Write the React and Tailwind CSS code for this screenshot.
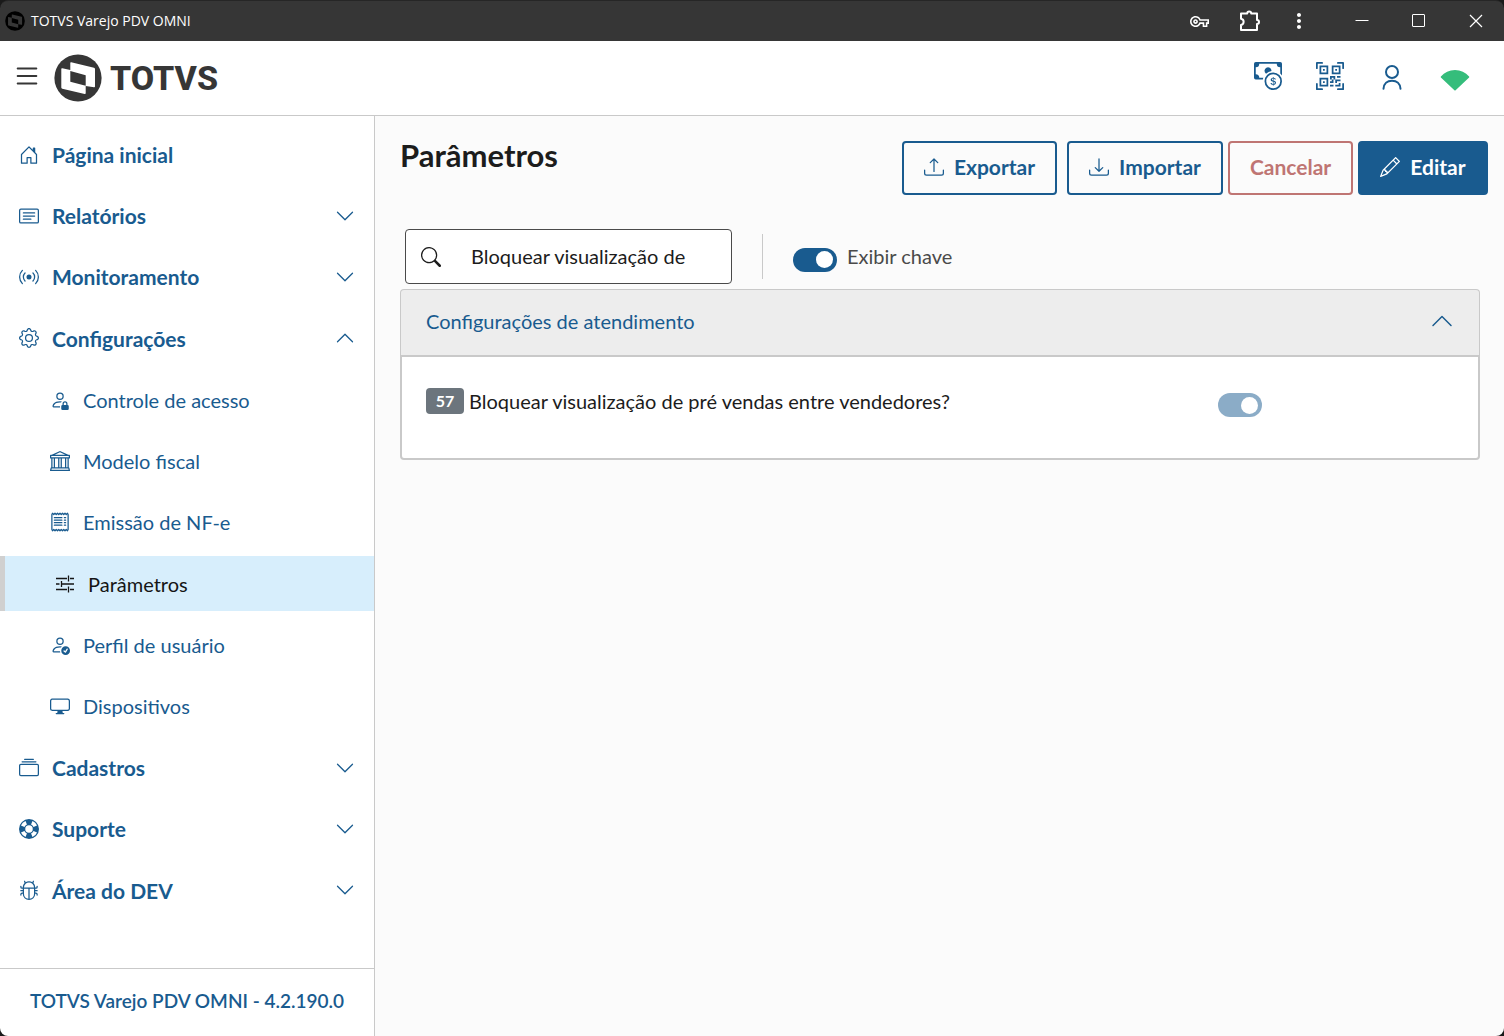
import { useState } from "react";
import clsx from "clsx";
import {
  BsBank,
  BsBroadcast,
  BsBug,
  BsCardText,
  BsCashCoin,
  BsChevronDown,
  BsChevronUp,
  BsCollection,
  BsDisplay,
  BsDownload,
  BsGear,
  BsHouseDoor,
  BsLifePreserver,
  BsList,
  BsPencil,
  BsPersonCheck,
  BsPersonLock,
  BsQrCodeScan,
  BsReceipt,
  BsSearch,
  BsUpload,
} from "react-icons/bs";
import { MdMoreVert, MdOutlineVpnKey } from "react-icons/md";

const menu = [
  { label: "Página inicial", icon: BsHouseDoor },
  { label: "Relatórios", icon: BsCardText, group: true },
  { label: "Monitoramento", icon: BsBroadcast, group: true },
  { label: "Configurações", icon: BsGear, group: true, open: true },
  { label: "Controle de acesso", icon: BsPersonLock, sub: true },
  { label: "Modelo fiscal", icon: BsBank, sub: true },
  { label: "Emissão de NF-e", icon: BsReceipt, sub: true },
  { label: "Parâmetros", icon: TuneIcon, sub: true, active: true },
  { label: "Perfil de usuário", icon: BsPersonCheck, sub: true },
  { label: "Dispositivos", icon: BsDisplay, sub: true },
  { label: "Cadastros", icon: BsCollection, group: true },
  { label: "Suporte", icon: BsLifePreserver, group: true },
  { label: "Área do DEV", icon: BsBug, group: true },
];

function LogoMark({ className }) {
  return (
    <svg viewBox="0 0 48 48" className={className} aria-hidden="true">
      <circle cx="24" cy="24" r="23.6" fill="currentColor" />
      <path
        className="fill-(--mark)"
        fillRule="evenodd"
        d="M17.2 8.3 40 13.8q1 .3 1 1.2V32.4q0 1-1 .8L31.7 31.9V39.2q0 1-1 .8L8.3 34.8q-1-.3-1-1.2V15q0-1 1-.8L16.3 16V9q0-.9.9-.7ZM16.3 17V27.7L31.7 31.8V21.2Z"
      />
    </svg>
  );
}

function TuneIcon({ className }) {
  return (
    <svg viewBox="0 0 20 20" className={className} fill="none" stroke="currentColor" strokeWidth="1.3">
      <path d="M1 4.5H12M15 4.5H19M13.5 1.5V7.5M1 10H4.5M6.5 10H19M6.5 7V13M1 15.5H12M15 15.5H19M13.5 12.5V18.5" />
    </svg>
  );
}

function PuzzleIcon() {
  return (
    <svg viewBox="0 0 22 22" className="size-[22px]" fill="none" stroke="currentColor" strokeWidth="2" strokeLinejoin="round">
      <path d="M3 3.5H9.2a2 2 0 0 1 4 0H19V10a2 2 0 0 1 0 4v6H3V15a3.2 3.2 0 0 0 0-6.3Z" />
    </svg>
  );
}

function UserIcon() {
  return (
    <svg viewBox="0 0 28 28" className="size-7" fill="none" stroke="currentColor" strokeWidth="2" strokeLinecap="round">
      <circle cx="14" cy="10" r="6" />
      <path d="M5.5 26.8C5.8 21.6 9.3 18.8 14 18.8S22.2 21.6 22.5 26.8" />
    </svg>
  );
}

function SignalIcon() {
  return (
    <svg viewBox="0 0 30 30" className="size-[30px] text-[#35bd7b]" fill="currentColor">
      <path d="M.9 15.5C4.500 11.200 9.300 9 15 9s10.500 2.200 14.100 6.500q.4.500 0 1L15.600 29.200q-.6.600-1.200 0L.9 16.500q-.4-.5 0-1Z" />
    </svg>
  );
}

function TitleBar() {
  return (
    <div className="flex h-[41px] shrink-0 items-center rounded-t-lg border-t border-[#262626] bg-[#363636] text-white">
      <LogoMark className="ml-[5px] size-5 text-black [--mark:#363636]" />
      <span className="ml-[6px] font-['Open_Sans',sans-serif] text-sm">TOTVS Varejo PDV OMNI</span>
      <div className="mr-[9px] ml-auto flex items-center">
        <button aria-label="Senhas" className="flex w-[50px] justify-center">
          <MdOutlineVpnKey className="size-[19px]" />
        </button>
        <button aria-label="Extensões" className="flex w-[50px] justify-center">
          <PuzzleIcon />
        </button>
        <button aria-label="Mais opções" className="flex w-[50px] justify-center">
          <MdMoreVert className="size-6" />
        </button>
      </div>
      <button aria-label="Minimizar" className="flex w-[57px] justify-center">
        <svg viewBox="0 0 14 14" className="size-[14px]" stroke="currentColor">
          <path d="M.5 6.5h13" />
        </svg>
      </button>
      <button aria-label="Maximizar" className="flex w-[57px] justify-center">
        <svg viewBox="0 0 14 14" className="size-[14px]" fill="none" stroke="currentColor">
          <rect x=".5" y=".5" width="12" height="12" rx=".5" />
        </svg>
      </button>
      <button aria-label="Fechar" className="flex w-[57px] justify-center">
        <svg viewBox="0 0 14 14" className="size-[14px]" stroke="currentColor" strokeWidth="1.2">
          <path d="m1 1 12 12M13 1 1 13" />
        </svg>
      </button>
    </div>
  );
}

function Header() {
  return (
    <header className="flex h-[75px] shrink-0 items-center border-b border-[#c9c9c9] bg-white pr-[34px] text-[#195b8f]">
      <button aria-label="Menu" className="ml-3 pb-1 text-[#363636]">
        <BsList className="size-[30px]" />
      </button>
      <a href="#" className="ml-3 flex items-center gap-2 text-[#363636]">
        <LogoMark className="size-12 [--mark:#ffffff]" />
        <span className="font-[Roboto,sans-serif] text-[34px] leading-none font-extrabold">TOTVS</span>
      </a>
      <div className="ml-auto flex items-center gap-[34px] pb-1">
        <button aria-label="Caixa">
          <BsCashCoin className="size-7" />
        </button>
        <button aria-label="QR Code">
          <BsQrCodeScan className="size-7" />
        </button>
        <button aria-label="Usuário">
          <UserIcon />
        </button>
        <SignalIcon />
      </div>
    </header>
  );
}

function MenuItem({ item }) {
  const Icon = item.icon;
  const Chevron = item.open ? BsChevronUp : BsChevronDown;
  return (
    <li>
      <a
        href="#"
        aria-current={item.active ? "page" : undefined}
        className={clsx(
          "flex h-[55px] items-center gap-[13px] pr-[19px]",
          item.sub ? "pl-[50px]" : "pl-[19px] text-[21px] font-bold",
          item.active && "border-l-5 border-[#d0d0d0] bg-[#d7eefc] text-[#151515]"
        )}
      >
        <Icon className="size-5" />
        <span>{item.label}</span>
        {item.group && <Chevron className="ml-auto size-5" />}
      </a>
    </li>
  );
}

function Sidebar() {
  return (
    <aside className="flex w-[375px] shrink-0 flex-col border-r border-[#c9c9c9] bg-white text-[#195b8f]">
      <nav className="flex-1 overflow-y-auto pt-[11px] pb-[50px]">
        <ul className="flex h-full flex-col justify-between">
          {menu.map((item) => (
            <MenuItem key={item.label} item={item} />
          ))}
        </ul>
      </nav>
      <footer className="flex h-[68px] items-center justify-center border-t border-[#c9c9c9] pb-[2px] text-[19px] font-semibold">
        TOTVS Varejo PDV OMNI - 4.2.190.0
      </footer>
    </aside>
  );
}

function Button({ className, children, ...props }) {
  return (
    <button
      className={clsx(
        "flex h-[54px] items-center justify-center gap-[10px] rounded border-2 pb-[2px] text-[21px] font-bold",
        className
      )}
      {...props}
    >
      {children}
    </button>
  );
}

function Switch(props) {
  return (
    <input
      type="checkbox"
      role="switch"
      className="flex h-6 w-11 shrink-0 appearance-none items-center rounded-full bg-[#bcbcbc] px-1 before:size-[17px] before:rounded-full before:bg-white checked:justify-end checked:bg-[#195b8f] disabled:bg-[#8bacc7]"
      {...props}
    />
  );
}

export default function App() {
  const [search, setSearch] = useState("Bloquear visualização de");
  const [showKey, setShowKey] = useState(true);
  const [open, setOpen] = useState(true);

  return (
    <div className="h-screen bg-[#1a1a1a] font-[Lato,sans-serif] text-xl text-[#1c1c1c]">
      <div className="flex h-full flex-col overflow-hidden rounded-lg">
        <TitleBar />
        <Header />
        <div className="flex min-h-0 flex-1">
          <Sidebar />
          <main className="min-w-0 flex-1 overflow-y-auto bg-[#fbfbfb] pt-[25px] pr-4 pl-[25px]">
            <div className="flex items-start justify-between">
              <h1 className="text-[31px] leading-7 font-bold">Parâmetros</h1>
              <div className="flex gap-[5px]">
                <Button className="mr-[5px] w-[155px] border-[#195b8f] text-[#195b8f]">
                  <BsUpload className="size-5" />
                  Exportar
                </Button>
                <Button className="w-[156px] border-[#195b8f] text-[#195b8f]">
                  <BsDownload className="size-5" />
                  Importar
                </Button>
                <Button className="w-[125px] border-[#bf7573] text-[#bf7573]" disabled>
                  Cancelar
                </Button>
                <Button className="w-[130px] border-[#195b8f] bg-[#195b8f] text-white">
                  <BsPencil className="size-5" />
                  Editar
                </Button>
              </div>
            </div>

            <div className="mt-[34px] ml-[5px] flex items-center">
              <label className="flex h-[55px] w-[327px] items-center gap-[30px] rounded border border-[#4a4a4a] bg-white px-[15px]">
                <BsSearch className="size-5 shrink-0" />
                <input
                  type="text"
                  aria-label="Pesquisar parâmetro"
                  value={search}
                  onChange={(e) => setSearch(e.target.value)}
                  className="min-w-0 flex-1 pb-[2px] outline-none"
                />
              </label>
              <div className="mx-[30px] h-[45px] border-l border-[#c9c9c9]" />
              <label className="flex items-end gap-[10px] text-[#4a4a4a]">
                <Switch checked={showKey} onChange={(e) => setShowKey(e.target.checked)} />
                <span className="pb-[2px]">Exibir chave</span>
              </label>
            </div>

            <section className="mt-[5px] mr-2">
              <button
                aria-expanded={open}
                onClick={() => setOpen(!open)}
                className="flex h-[66px] w-full items-center justify-between rounded-t border border-b-0 border-[#c9c9c9] bg-[#ededed] px-[25px] pb-1 text-[#195b8f]"
              >
                Configurações de atendimento
                <BsChevronUp className="size-6" />
              </button>
              {open && (
                <div className="grid grid-cols-[3fr_1fr] items-end gap-3 rounded-b border-2 border-[#c9c9c9] bg-white pt-[30px] pb-[41px] pl-6">
                  <div className="flex items-center gap-[5px] pb-[2px]">
                    {showKey && (
                      <span className="flex h-[26px] w-[38px] items-center justify-center rounded bg-[#6c757d] text-base font-bold text-white">
                        57
                      </span>
                    )}
                    <label htmlFor="param-57">Bloquear visualização de pré vendas entre vendedores?</label>
                  </div>
                  <Switch id="param-57" defaultChecked disabled />
                </div>
              )}
            </section>
          </main>
        </div>
      </div>
    </div>
  );
}
